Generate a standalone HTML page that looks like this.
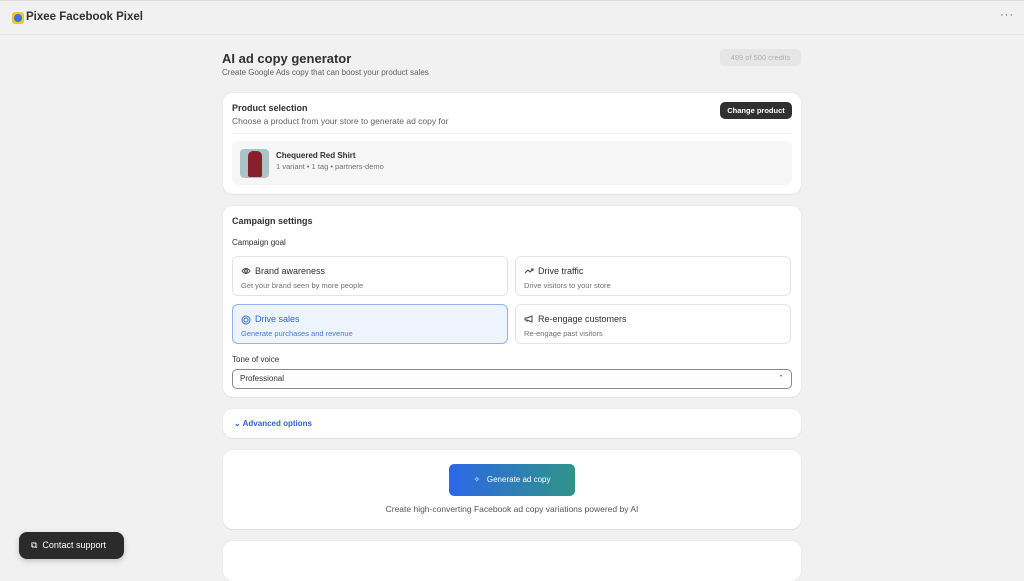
<!DOCTYPE html>
<html><head><meta charset="utf-8"><style>
*{box-sizing:border-box;margin:0;padding:0}
body{width:1024px;height:571px;overflow:hidden;background:#f1f1f1;font-family:"Liberation Sans",sans-serif;color:#303030;position:relative}
.a{position:absolute}
.card{position:absolute;left:223px;width:578px;background:#fff;border-radius:10px;box-shadow:0 1px 0 #e0e0e0,0 0 0 1px #ececec}
.t{font-size:9px;font-weight:bold;color:#303030}
.s{font-size:8px;color:#616161}
.opt{position:absolute;width:276px;height:40px;border:1px solid #e3e3e3;border-radius:6px;background:#fff}
.opt .h{position:absolute;left:22px;top:9px;font-size:9px;color:#303030}
.opt .d{position:absolute;left:8px;top:24px;font-size:7.5px;color:#707070}
.opt svg{position:absolute;left:8px;top:10px}
</style></head><body>
<div class="a" style="left:0;top:0;width:1024px;height:35px;border-bottom:1px solid #e6e6e6;border-top:1px solid #ddd"></div>
<div class="a" style="left:12px;top:12px;width:12px;height:12px;background:#f5c12e;border-radius:3px"><div style="margin:2px;width:8px;height:8px;background:#3a78d8;border-radius:50%"></div></div>
<div class="a" style="left:26px;top:11px;font-size:11.5px;font-weight:bold;color:#303030">Pixee Facebook Pixel</div>
<div class="a" style="left:1000px;top:9px;font-size:11px;color:#555;letter-spacing:1px">···</div>

<div class="a" style="left:222px;top:51px;font-size:13px;font-weight:bold">AI ad copy generator</div>
<div class="a" style="left:222px;top:68px;font-size:8px;color:#616161">Create Google Ads copy that can boost your product sales</div>
<div class="a" style="left:720px;top:49px;width:81px;height:17px;background:#e6e6e6;border-radius:5px;font-size:7.5px;color:#b0b0b0;text-align:center;line-height:17px">499 of 500 credits</div>

<div class="card" style="top:93px;height:101px">
<div class="a t" style="left:9px;top:10px">Product selection</div>
<div class="a" style="left:9px;top:23px;font-size:8.5px;color:#616161">Choose a product from your store to generate ad copy for</div>
<div class="a" style="left:497px;top:9px;width:72px;height:17px;background:#303030;border-radius:5px;color:#fff;font-size:7.5px;font-weight:bold;text-align:center;line-height:17px">Change product</div>
<div class="a" style="left:9px;top:40px;width:560px;height:1px;background:#ececec"></div>
<div class="a" style="left:9px;top:48px;width:560px;height:44px;background:#f6f6f6;border-radius:6px"></div>
<div class="a" style="left:17px;top:56px;width:29px;height:29px;background:#a9c3c6;border-radius:4px;overflow:hidden"><div style="margin:2px auto;width:14px;height:26px;background:#8a1f2c;border-radius:5px 5px 2px 2px"></div></div>
<div class="a" style="left:53px;top:58px;font-size:8px;font-weight:bold">Chequered Red Shirt</div>
<div class="a" style="left:53px;top:69px;font-size:7.5px;color:#707070">1 variant • 1 tag • partners-demo</div>
</div>

<div class="card" style="top:206px;height:191px">
<div class="a t" style="left:9px;top:10px">Campaign settings</div>
<div class="a" style="left:9px;top:32px;font-size:8px;color:#303030">Campaign goal</div>
<div class="opt" style="left:9px;top:50px"><svg width="10" height="8" viewBox="0 0 10 8"><path d="M1 4Q5-1 9 4Q5 9 1 4Z" fill="none" stroke="#444"/><circle cx="5" cy="4" r="1.4" fill="none" stroke="#444"/></svg><div class="h">Brand awareness</div><div class="d">Get your brand seen by more people</div></div>
<div class="opt" style="left:292px;top:50px"><svg width="10" height="8" viewBox="0 0 10 8"><path d="M1 6L4 3L6 5L9 2M7 2H9V4" fill="none" stroke="#444"/></svg><div class="h">Drive traffic</div><div class="d">Drive visitors to your store</div></div>
<div class="opt" style="left:9px;top:98px;background:#eef4fd;border-color:#8fb4ef"><svg width="10" height="10" viewBox="0 0 10 10"><circle cx="5" cy="5" r="4" fill="none" stroke="#3b6fdc"/><circle cx="5" cy="5" r="2" fill="none" stroke="#3b6fdc"/></svg><div class="h" style="color:#2f63d0">Drive sales</div><div class="d" style="color:#4a78d8">Generate purchases and revenue</div></div>
<div class="opt" style="left:292px;top:98px"><svg width="10" height="8" viewBox="0 0 10 8"><path d="M1 3H3L8 1V7L3 5H1ZM3 5V7" fill="none" stroke="#444"/></svg><div class="h">Re-engage customers</div><div class="d">Re-engage past visitors</div></div>
<div class="a" style="left:9px;top:149px;font-size:8px">Tone of voice</div>
<div class="a" style="left:9px;top:163px;width:560px;height:20px;border:1px solid #8a8a8a;border-radius:5px;background:#fdfdfd;font-size:8px;line-height:18px;padding-left:7px">Professional<span style="position:absolute;right:7px;top:0;font-size:7px;color:#555">⌃</span></div>
</div>

<div class="card" style="top:409px;height:29px">
<div class="a" style="left:11px;top:10px;font-size:8px;font-weight:bold;color:#2f63d0">⌄ Advanced options</div>
</div>

<div class="card" style="top:450px;height:79px">
<div class="a" style="left:226px;top:14px;width:126px;height:32px;border-radius:5px;background:linear-gradient(90deg,#2d67e6,#2f9488);color:#fff;font-size:8px;line-height:32px;text-align:center">✧&nbsp;&nbsp; Generate ad copy</div>
<div class="a" style="left:0;width:578px;top:54px;text-align:center;font-size:8.5px;color:#555">Create high-converting Facebook ad copy variations powered by AI</div>
</div>
<div class="card" style="top:541px;height:40px"></div>

<div class="a" style="left:19px;top:532px;width:105px;height:27px;background:#2b2b2b;border-radius:8px;color:#fff;font-size:9px;line-height:27px;padding-left:12px;box-shadow:0 2px 6px rgba(0,0,0,.2)">⧉&nbsp; Contact support</div>
</body></html>
